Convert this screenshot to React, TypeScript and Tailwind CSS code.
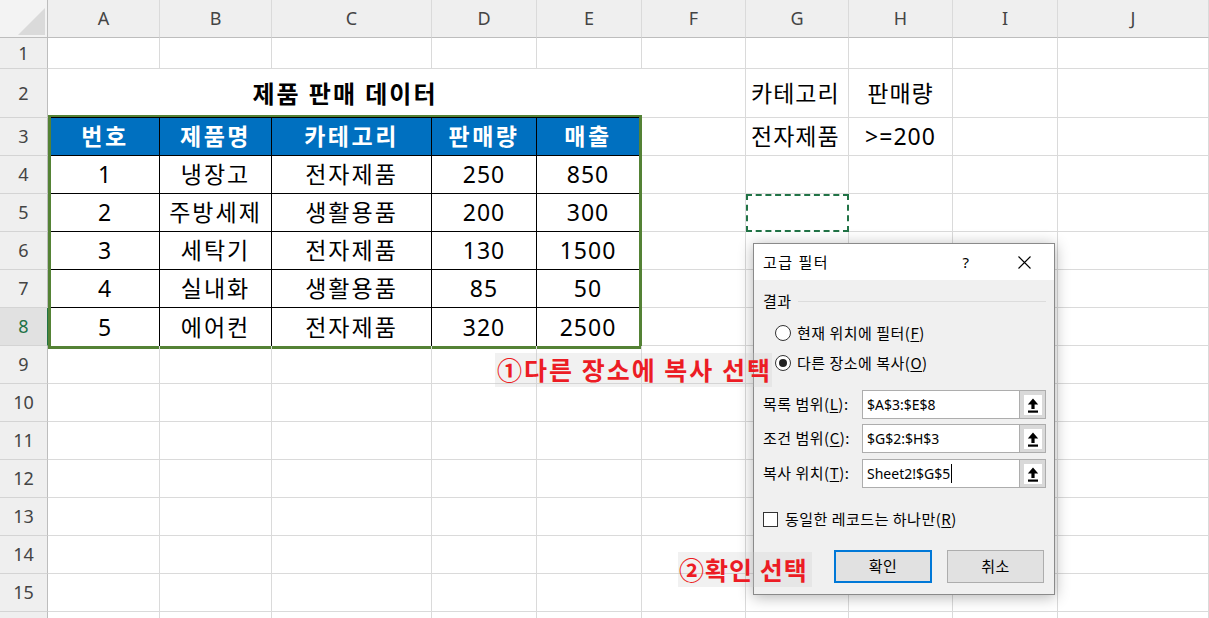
import React from "react";

const letters = ["A", "B", "C", "D", "E", "F", "G", "H", "I", "J"];
const colW = [
  "w-[112px]",
  "w-[112px]",
  "w-[160px]",
  "w-[105px]",
  "w-[105px]",
  "w-[104px]",
  "w-[103px]",
  "w-[104px]",
  "w-[105px]",
  "w-[151px]",
];

const tableHead = ["번호", "제품명", "카테고리", "판매량", "매출"];
const tableRows = [
  ["1", "냉장고", "전자제품", "250", "850"],
  ["2", "주방세제", "생활용품", "200", "300"],
  ["3", "세탁기", "전자제품", "130", "1500"],
  ["4", "실내화", "생활용품", "85", "50"],
  ["5", "에어컨", "전자제품", "320", "2500"],
];

const rows = Array.from({ length: 16 }, (_, i) => i + 1);

function rowHeight(r: number) {
  if (r === 1) return "h-[31px]";
  if (r === 2) return "h-[49px]";
  return "h-[38px]";
}

function Corner() {
  return (
    <div className="w-[48px] h-[38px] bg-[#f3f3f3] border-r border-b border-[#bdbdbd] shrink-0">
      <svg width="47" height="37" viewBox="0 0 47 37">
        <polygon points="18,35 45,35 45,8" fill="#dadada" />
      </svg>
    </div>
  );
}

function ColumnHeader() {
  return (
    <div className="flex h-[38px]">
      <Corner />
      {letters.map((l, i) => (
        <div
          key={l}
          className={`${colW[i]} shrink-0 h-[38px] bg-[#efefef] border-r border-b border-r-[#dadada] border-b-[#bdbdbd] flex items-center justify-center text-[18px] text-[#444]`}
        >
          {l}
        </div>
      ))}
    </div>
  );
}

function RowHeaders() {
  return (
    <div className="flex flex-col w-[48px] shrink-0">
      {rows.map((r) => (
        <div
          key={r}
          className={`${rowHeight(r)} shrink-0 border-b border-r border-b-[#d4d4d4] flex items-center justify-center text-[18px] ${
            r === 8
              ? "bg-[#e1e1e1] text-[#217346] border-r-[#217346]"
              : "bg-[#efefef] text-[#444] border-r-[#bdbdbd]"
          }`}
        >
          {r < 16 ? r : ""}
        </div>
      ))}
    </div>
  );
}

function DataTable() {
  return (
    <div className="col-start-1 col-end-6 row-start-3 row-end-9 -my-[3px] border-[3px] border-[#548235] bg-white">
      <div className="grid grid-cols-[109px_112px_160px_105px_102px] grid-rows-[38px_38px_38px_38px_38px_38px] border-t border-black -mt-px">
        {tableHead.map((h, i) => (
          <div
            key={h}
            className={`bg-[#0070c0] text-white font-bold text-[23px] tracking-[2.5px] flex items-center justify-center border-b border-black ${
              i < 4 ? "border-r" : ""
            }`}
          >
            {h}
          </div>
        ))}
        {tableRows.map((row, ri) =>
          row.map((v, ci) => (
            <div
              key={`${ri}-${ci}`}
              className={`text-[23px] text-black flex items-center justify-center border-black ${
                ci === 1 || ci === 2 ? "tracking-[2px]" : "tracking-[1px]"
              } ${ci < 4 ? "border-r" : ""} ${ri < 4 ? "border-b" : ""}`}
            >
              {v}
            </div>
          ))
        )}
      </div>
    </div>
  );
}

function cellText(r: number, c: number) {
  if (r === 2 && c === 6) return "카테고리";
  if (r === 2 && c === 7) return "판매량";
  if (r === 3 && c === 6) return "전자제품";
  if (r === 3 && c === 7) return ">=200";
  return "";
}

function Sheet() {
  const cells: React.ReactNode[] = [];
  rows.forEach((r) => {
    letters.forEach((_, c) => {
      if (r >= 2 && r <= 8 && c < 5) return;
      const dashed = r === 5 && c === 6;
      cells.push(
        <div
          key={`${r}-${c}`}
          className={`flex items-center text-[23px] text-black ${
            c === 6 ? "justify-start pl-[5px] tracking-[1px]" : "justify-center tracking-[1px]"
          } ${
            dashed
              ? "border-2 border-dashed border-[#217346]"
              : "border-r border-b border-[#dadada]"
          }`}
        >
          {cellText(r, c)}
        </div>
      );
    });
  });

  return (
    <div className="grid grid-cols-[112px_112px_160px_105px_105px_104px_103px_104px_105px_151px] grid-rows-[31px_49px_repeat(14,38px)]">
      <div className="col-start-1 col-end-6 row-start-2 flex items-center justify-center text-[24px] font-bold tracking-[2px] text-black">
        제품 판매 데이터
      </div>
      <DataTable />
      {cells}
    </div>
  );
}

function RefButton() {
  return (
    <div className="w-[27px] h-[29px] shrink-0 bg-[#d9d9d9] border border-[#adadad] flex items-center justify-center">
      <div className="w-[18px] h-[20px] bg-white">
        <svg width="18" height="20" viewBox="0 0 18 20">
          <path d="M9 3.5 L14.2 9.5 L10.6 9.5 L10.6 14 L7.4 14 L7.4 9.5 L3.8 9.5 Z" fill="#000" />
          <rect x="4" y="15.5" width="10" height="2.2" fill="#000" />
        </svg>
      </div>
    </div>
  );
}

function RangeRow({ label, mn, after, value, caret, className }: { label: string; mn: string; after: string; value: string; caret?: boolean; className: string }) {
  return (
    <div className={`flex h-[29px] ${className}`}>
      <div className="w-[99px] shrink-0 flex items-center">
        {label}(<u className="underline-offset-2">{mn}</u>){after}
      </div>
      <div className="flex-1 bg-white border border-[#adadad] border-r-0 flex items-center pl-[4px] font-['Noto_Sans',sans-serif] text-[14px] tracking-normal">
        {value}
        {caret && <span className="w-px h-[19px] bg-black ml-px" />}
      </div>
      <RefButton />
    </div>
  );
}

function FilterDialog() {
  return (
    <div className="absolute left-[753px] top-[243px] w-[302px] h-[352px] border border-[#8a8a8a] bg-[#f0f0f0] shadow-[0_2px_14px_rgba(0,0,0,0.3)] font-['Noto_Sans_CJK_KR',sans-serif] text-[15px] tracking-[0.5px] text-black">
      <div className="h-[36px] bg-white flex items-center pl-[9px] pr-[7px]">
        <span className="tracking-[1.5px]">고급 필터</span>
        <span className="flex-1" />
        <span className="w-[46px] text-center font-['Noto_Sans',sans-serif]">?</span>
        <span className="w-[46px] ml-[12px] flex justify-center">
          <svg width="13" height="13" viewBox="0 0 13 13">
            <path d="M0.5 0.5 L12.5 12.5 M12.5 0.5 L0.5 12.5" stroke="#000" strokeWidth="1.1" />
          </svg>
        </span>
      </div>

      <div className="pl-[9px] pr-[8px] pt-[11px] flex flex-col">
        <div className="h-[20px] flex items-center">
          <span>결과</span>
          <span className="flex-1 h-px bg-[#dcdcdc] ml-[6px]" />
        </div>

        <div className="mt-[12px] h-[20px] flex items-center pl-[12px] gap-[6px]">
          <span className="w-[16px] h-[16px] rounded-full border border-[#333] bg-white" />
          <span>
            현재 위치에 필터(<u className="underline-offset-2">F</u>)
          </span>
        </div>

        <div className="mt-[10px] h-[20px] flex items-center pl-[12px] gap-[6px]">
          <span className="w-[16px] h-[16px] rounded-full border border-[#333] bg-white flex items-center justify-center">
            <span className="w-[8px] h-[8px] rounded-full bg-[#222]" />
          </span>
          <span>
            다른 장소에 복사(<u className="underline-offset-2">O</u>)
          </span>
        </div>

        <RangeRow className="mt-[17px]" label="목록 범위" mn="L" after=":" value="$A$3:$E$8" />
        <RangeRow className="mt-[5px]" label="조건 범위" mn="C" after=":" value="$G$2:$H$3" />
        <RangeRow className="mt-[6px]" label="복사 위치" mn="T" after=":" value="Sheet2!$G$5" caret />

        <div className="mt-[21px] h-[20px] flex items-center gap-[7px]">
          <span className="w-[15px] h-[15px] border border-[#333] bg-white" />
          <span>
            동일한 레코드는 하나만(<u className="underline-offset-2">R</u>)
          </span>
        </div>

        <div className="mt-[21px] flex">
          <div className="ml-[71px] w-[98px] h-[33px] border-2 border-[#0078d7] bg-[#e1e1e1] flex items-center justify-center">
            확인
          </div>
          <div className="ml-[15px] w-[97px] h-[33px] border border-[#adadad] bg-[#e1e1e1] flex items-center justify-center">
            취소
          </div>
        </div>
      </div>
    </div>
  );
}

export default function App() {
  return (
    <div className="relative w-[1209px] h-[618px] overflow-hidden bg-white font-['Noto_Sans','Noto_Sans_CJK_KR',sans-serif]">
      <ColumnHeader />
      <div className="flex">
        <RowHeaders />
        <Sheet />
      </div>

      <FilterDialog />

      <div className="absolute left-[495px] top-[353px] w-[277px] h-[34px] bg-[rgba(200,200,200,0.25)] flex items-center pl-[2px] font-['Noto_Sans_CJK_KR',sans-serif] text-[25px] font-bold tracking-[2px] text-[#ec1c24] whitespace-nowrap">
        ①다른 장소에 복사 선택
      </div>
      <div className="absolute left-[678px] top-[552px] w-[134px] h-[35px] bg-[rgba(200,200,200,0.25)] flex items-center pl-[1px] font-['Noto_Sans_CJK_KR',sans-serif] text-[25px] font-bold tracking-[1px] text-[#ec1c24] whitespace-nowrap">
        ②확인 선택
      </div>
    </div>
  );
}
